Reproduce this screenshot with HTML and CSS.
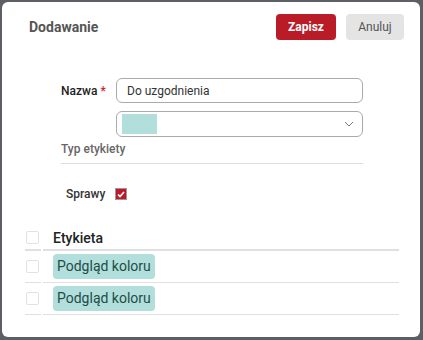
FILE: index.html
```html
<!DOCTYPE html>
<html lang="pl">
<head>
    <meta charset="UTF-8">
    <title>Dodawanie</title>
    <link rel="stylesheet" href="styles.css">
</head>
<body>
    <div class="dialog">
        <div class="dialog-header">
            <h2 class="dialog-title">Dodawanie</h2>
            <div class="actions">
                <button class="btn btn-primary">Zapisz</button>
                <button class="btn btn-secondary">Anuluj</button>
            </div>
        </div>

        <div class="form">
            <div class="form-row">
                <label class="form-label">Nazwa <span class="req">*</span></label>
                <input class="text-input" type="text" value="Do uzgodnienia">
            </div>
            <div class="form-row">
                <span class="form-label"></span>
                <div class="select">
                    <span class="swatch"></span>
                    <svg class="chevron" width="10" height="6" viewBox="0 0 10 6"><path d="M1 1l4 4 4-4" fill="none" stroke="#777" stroke-width="1"/></svg>
                </div>
            </div>
            <div class="field-caption">Typ etykiety</div>

            <div class="check-row">
                <span class="check-label">Sprawy</span>
                <span class="checkbox checked">
                    <svg width="8" height="7" viewBox="0 0 8 7"><path d="M1 3.5l2 2 4-4.5" fill="none" stroke="#fff" stroke-width="1.6"/></svg>
                </span>
            </div>
        </div>

        <table class="grid">
            <thead>
                <tr>
                    <th class="col-check"><span class="box"></span></th>
                    <th class="col-name">Etykieta</th>
                </tr>
            </thead>
            <tbody>
                <tr>
                    <td class="col-check"><span class="box"></span></td>
                    <td class="col-name"><span class="chip">Podgląd koloru</span></td>
                </tr>
                <tr>
                    <td class="col-check"><span class="box"></span></td>
                    <td class="col-name"><span class="chip">Podgląd koloru</span></td>
                </tr>
            </tbody>
        </table>
    </div>
</body>
</html>
```

FILE: styles.css
```css
body {
    margin: 0;
    padding: 2px;
    background-color: #5c6064;
    font-family: Roboto, 'Liberation Sans', sans-serif;
    color: #333;
}
.dialog {
    background: #fff;
    border-radius: 6px;
    height: 335px;
    box-sizing: border-box;
    width: 418px;
    padding: 12px 16px 0 23px;
}
.dialog-header {
    display: flex;
    align-items: center;
    justify-content: space-between;
    height: 26px;
}
.dialog-title {
    margin: 0 0 0 4px;
    font-size: 14px;
    font-weight: 700;
    color: #555;
}
.actions {
    display: flex;
    gap: 10px;
}
.btn {
    height: 26px;
    border: none;
    border-radius: 4px;
    font-family: inherit;
    font-size: 12px;
    padding: 0;
}
.btn-primary {
    width: 60px;
    background: #b91c26;
    color: #fff;
    font-weight: 700;
}
.btn-secondary {
    width: 58px;
    background: #e4e4e4;
    color: #555;
}
.form {
    padding: 38px 0 0 36px;
    width: 302px;
}
.form-row {
    display: flex;
    align-items: center;
    margin-bottom: 8px;
}
.form-label {
    width: 53px;
    flex: none;
    font-size: 12px;
    font-weight: 500;
    color: #222;
    margin-right: 2px;
}
.req {
    color: #c62828;
}
.text-input {
    flex: 1;
    height: 25px;
    box-sizing: border-box;
    border: 1px solid #aaa;
    border-radius: 6px;
    padding: 0 10px;
    font-family: inherit;
    font-size: 12px;
    color: #333;
}
.select {
    flex: 1;
    height: 26px;
    box-sizing: border-box;
    border: 1px solid #aaa;
    border-radius: 6px;
    display: flex;
    align-items: center;
    justify-content: space-between;
    padding: 0 8px 0 5px;
}
.swatch {
    width: 35px;
    height: 20px;
    background: #b2dfdb;
}
.field-caption {
    font-size: 12px;
    font-weight: 500;
    color: #666;
    margin-top: -3px;
    padding-bottom: 7px;
    border-bottom: 1px solid #ddd;
}
.check-row {
    display: flex;
    align-items: center;
    margin-top: 23px;
    padding-left: 5px;
}
.check-label {
    font-size: 12px;
    font-weight: 500;
    color: #333;
    width: 49px;
}
.checkbox {
    width: 12px;
    height: 12px;
    display: inline-flex;
    align-items: center;
    justify-content: center;
    box-sizing: border-box;
}
.checkbox.checked {
    background: #c0182a;
    border: 1px solid #999;
}
.grid {
    margin-top: 25px;
    margin-left: -2px;
    border-collapse: separate;
    border-spacing: 2px 0;
    width: 378px;
}
.grid th, .grid td {
    padding: 0;
    text-align: left;
}
.col-check {
    width: 16px;
}
.grid thead th {
    height: 23px;
    border-bottom: 2px solid #e0e0e0;
    font-size: 14px;
    font-weight: 500;
    color: #222;
    vertical-align: middle;
}
.grid thead .col-name {
    padding-left: 10px;
}
.grid tbody td {
    height: 31px;
    border-bottom: 1px solid #e0e0e0;
}
.grid tbody .col-name {
    padding-left: 10px;
}
.box {
    display: block;
    width: 13px;
    height: 13px;
    border: 1px solid #e2e2e2;
    border-radius: 2px;
    box-sizing: border-box;
    margin-left: 1px;
}
.chip {
    display: inline-block;
    background: #b2dfdb;
    color: #1d4d48;
    font-size: 14px;
    padding: 4px 4px;
    border-radius: 4px;
    line-height: 17px;
}
```
